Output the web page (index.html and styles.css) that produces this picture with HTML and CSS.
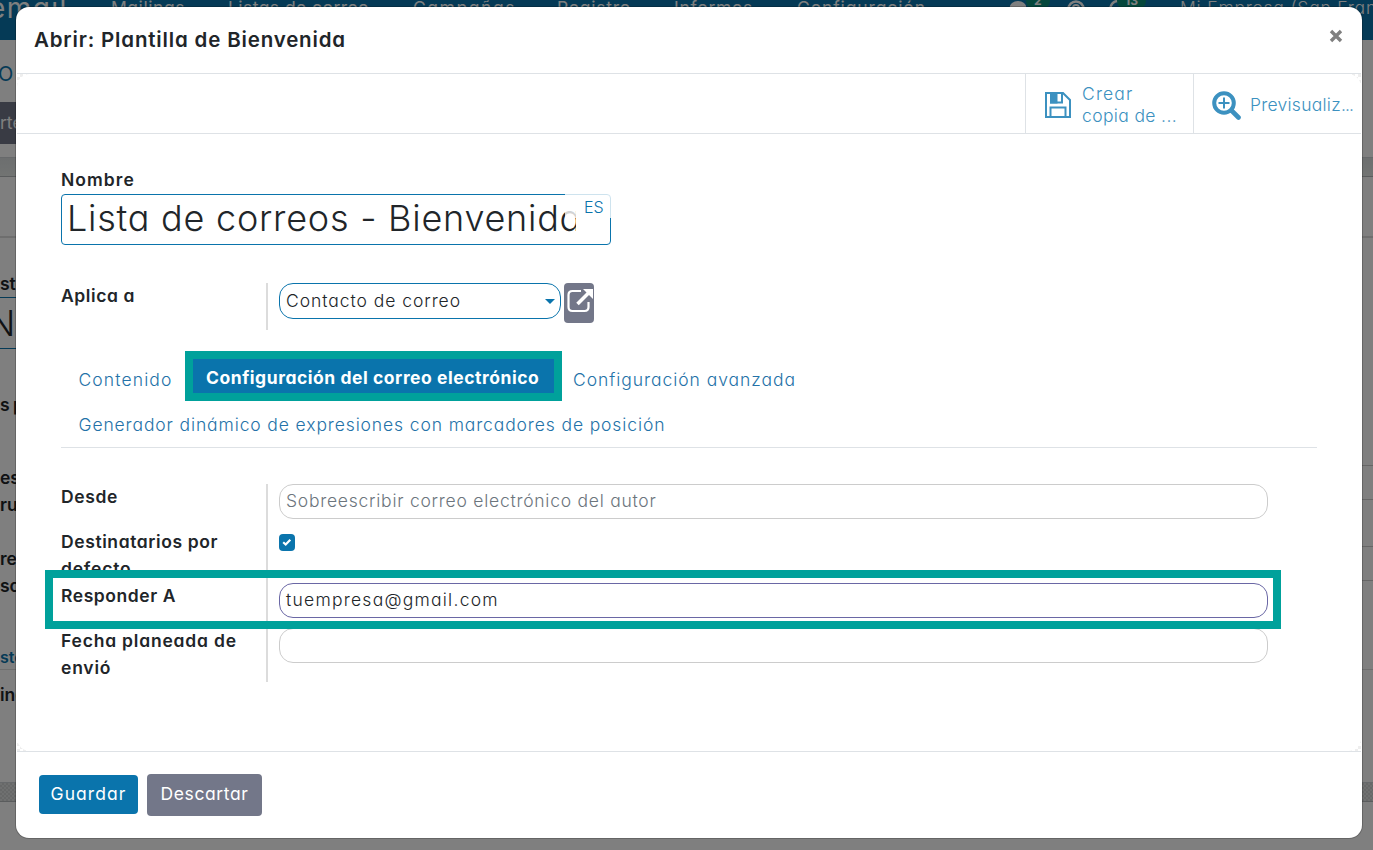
FILE: index.html
```
<!DOCTYPE html>
<html lang="es">
<head>
<meta charset="utf-8">
<title>Plantilla de Bienvenida</title>
<link rel="stylesheet" href="styles.css">
</head>
<body>
<div class="page">
  <nav class="nav">
    <span class="brand">email</span>
    <span class="n1">Mailings</span>
    <span class="n2">Listas de correo</span>
    <span class="n3">Campañas</span>
    <span class="n4">Registro</span>
    <span class="n5">Informes</span>
    <span class="n6">Configuración</span>
    <svg class="nav-icons" width="150" height="20" viewBox="0 0 150 20"><ellipse cx="18" cy="8" rx="8.500" ry="7" fill="#fff"/><circle cx="76" cy="9" r="7.500" fill="none" stroke="#fff" stroke-width="2.500"/><path d="M73 8a3 3 0 0 1 6 0c0 2-3 2-3 4" fill="none" stroke="#fff" stroke-width="2"/><path d="M118 1a8 8 0 0 0-5 14" fill="none" stroke="#fff" stroke-width="2.500"/></svg>
    <b class="count c1">2</b><b class="count c2">13</b>
    <span class="company">Mi Empresa (San Francisco)</span>
  </nav>
  <div class="crumb">O</div>
  <div class="actions"><span>rte</span></div>
  <div class="strip"></div>
  <div class="status"></div>
  <div class="bg-label">ste</div>
  <div class="bg-name">N</div>
  <div class="bg-row sp">s p</div>
  <div class="bg-row field"><span>es<br>ru:</span><i></i></div>
  <div class="bg-row field"><span>re<br>so</span><i></i></div>
  <div class="bg-tab">sto</div>
  <div class="bg-last">ing</div>
  <div class="strip pattern"></div>
</div>
<div class="backdrop"></div>
<section class="modal">
  <header class="head"><h1><span class="title">Abrir: Plantilla de Bienvenida</span></h1>
    <svg width="14" height="14" viewBox="0 0 14 14"><path d="M2 2l10 10M12 2L2 12" stroke="#7f7f7f" stroke-width="3.400"/></svg>
  </header>
  <main class="content">
    <div class="sheet">
      <div class="buttonbox">
        <div class="stat"><svg width="28" height="28" viewBox="0 0 28 28" fill="none" stroke="#3c91c0" stroke-width="2"><path d="M2 2h17l7 7v17H2z"/><path d="M6.500 26v-9.500h15V26"/><path d="M7 2v9.500h11V2"/><path d="M7 2h5.500v9.500H7z" fill="#3c91c0"/></svg><p><span class="s1">Crear</span><br><span class="s2">copia de ...</span></p></div>
        <div class="stat last"><svg width="29" height="29" viewBox="0 0 29 29" fill="none" stroke="#3c91c0"><circle cx="12" cy="12" r="9.800" stroke-width="4"/><path d="M12 6.500v11M6.500 12h11" stroke-width="2"/><path d="M19.500 19.500l7 7" stroke-width="4.600" stroke-linecap="round"/></svg><p><span class="s3">Previsualiz<span class="dots">...</span></span></p></div>
      </div>
      <div class="form">
        <label class="name-label"><span class="l1">Nombre</span></label>
        <div class="name-input"><div class="clip"><span class="big">Lista de correos - Bienvenida</span></div><span class="lang">ES</span></div>
        <div class="group g1">
          <div class="row"><label><span class="l2">Aplica a</span></label>
            <div class="select"><span class="v1">Contacto de correo</span><i></i></div>
            <div class="ext"><svg width="28" height="28" viewBox="0 0 28 28" fill="none" stroke="#fff"><path d="M15 4H6.500Q2.500 4 2.500 8v12q0 4 4 4h12q4 0 4-4v-5" stroke-width="2.200"/><path d="M11.500 17L23 5.500" stroke-width="3.600"/><path d="M17 2h10v10z" fill="#fff" stroke="none"/></svg></div>
          </div>
        </div>
        <div class="tabs">
          <div class="tabrow"><a class="t1"><span class="t1s">Contenido</span></a><a class="active"><span class="t2s">Configuración del correo electrónico</span></a><a class="t3"><span class="t3s">Configuración avanzada</span></a></div>
          <div class="tabrow second"><a class="t1"><span class="t4s">Generador dinámico de expresiones con marcadores de posición</span></a></div>
        </div>
        <div class="group g2">
          <div class="row"><label><span class="l3">Desde</span></label><div class="input ph"><span class="v2">Sobreescribir correo electrónico del autor</span></div></div>
          <div class="row tall"><label><span class="l4">Destinatarios por</span><br><span class="l4b">defecto</span></label><div class="check"><svg width="16" height="16" viewBox="0 0 16 16"><path d="M4.200 8.200l2.500 2.300 4.600-4.700" fill="none" stroke="#fff" stroke-width="2.200"/></svg></div></div>
          <div class="row"><label><span class="l5">Responder A</span></label><div class="input focus"><span class="v3">tuempresa@gmail.com</span></div></div>
          <div class="row tall"><label><span class="l6">Fecha planeada de</span><br><span class="l6">envió</span></label><div class="input"></div></div>
          <div class="mark"></div>
        </div>
      </div>
    </div>
  </main>
  <footer class="foot"><button class="save"><span class="b1">Guardar</span></button><button class="discard"><span class="b2">Descartar</span></button></footer>
</section>
</body>
</html>
```
FILE: styles.css
```
*{box-sizing:border-box}
body{margin:0;width:1373px;height:850px;overflow:hidden;position:relative;font-family:Inter,sans-serif;font-feature-settings:"cv11";font-size:17.5px;font-weight:350;line-height:27px;color:#212529}
.page{height:850px;background:#fff;overflow:hidden;font-weight:600}
.nav{height:40px;background:#0a74ac;position:relative;color:#fff;font-weight:400}
.nav span{position:absolute;top:-6px;white-space:nowrap}
.nav .brand{left:-11px;top:-5px;font-size:28px;letter-spacing:1.4px}
.n1{left:111px;letter-spacing:.55px}
.n2{left:228px;letter-spacing:.44px}
.n3{left:413px;letter-spacing:1.55px}
.n4{left:557px;letter-spacing:.76px}
.n5{left:674px;letter-spacing:.73px}
.n6{left:797px;letter-spacing:.88px}
.nav .company{left:1180px;font-weight:350;letter-spacing:.8px}
.nav-icons{position:absolute;left:1000px;top:0}
.count{position:absolute;top:-8px;height:18px;border-radius:9px;background:#0b8f79;font-size:12px;line-height:17px;padding:0 8px}
.c1{left:1026px}
.c2{left:1117px}
.crumb{height:62px;padding-top:21px;color:#0a74ac;font-size:20px;font-weight:400;text-indent:-2px}
.actions{width:100px;height:42px;background:#737789;color:#fff;line-height:42px;font-weight:400}
.strip{height:20px;margin-top:13px;border-top:1px solid #ced2d6;border-bottom:1px solid #b5b8bb;background:linear-gradient(#dadedf,#e4e8e6)}
.status{height:61px;border-bottom:2px solid #ddd}
.bg-label{height:59px;padding-top:32px}
.bg-name{width:600px;height:52px;border-top:1px solid #0a74ac;border-bottom:1px solid #0a74ac;font-size:36px;line-height:50px;font-weight:300;text-indent:-12px}
.bg-row{height:81px}
.sp{height:116px;padding-top:42px;word-spacing:-1px}
.field{display:flex;justify-content:space-between}
.field span{margin-top:-1px}
.field i{width:20px;height:35px;border:solid #ccc;border-width:1px 0}
.bg-tab{height:43px;padding-top:17px;color:#0a74ac;font-size:16px;border-bottom:1px solid #ddd}
.bg-last{height:112px;padding-top:11px}
.pattern{margin:0;background:repeating-conic-gradient(#cfd1d0 0 25%,#dfe1e0 0 50%) 0 0/4px 4px}
.backdrop{position:absolute;inset:0;background:rgba(0,0,0,.5)}
.modal{position:absolute;left:16px;top:7px;width:1346px;height:831px;background:#fff;border-radius:13px;display:flex;flex-direction:column;padding:0 1px;box-shadow:0 0 0 1px rgba(0,0,0,.2);overflow:hidden}
.head{height:67px;flex:none;border-bottom:1px solid #dee2e6;display:flex;justify-content:space-between;padding:19px 18px 0 17px}
.head svg{margin-top:3px}
h1{margin:0;font-size:20.5px;font-weight:600;line-height:27px}
.title{letter-spacing:.83px}
.content{height:678px;flex:none;border-bottom:1px solid #dee2e6;background:repeating-conic-gradient(#eee 0 25%,#fff 0 50%) 0 0/6px 6px}
.sheet{height:677px;border-radius:13px;background:#fff;overflow:hidden}
.buttonbox{height:60px;border-bottom:1px solid #dee2e6;display:flex;justify-content:flex-end}
.stat{width:168px;border-left:1px solid #dee2e6;display:flex;align-items:center;gap:10px;padding:3px 0 0 18px;line-height:22px;color:#3c91c0}
.stat.last{gap:9px}
.stat p{margin:0 0 1px;white-space:nowrap}
.s1{letter-spacing:1.15px}
.s2{letter-spacing:.36px}
.s3{letter-spacing:.25px}
.dots{letter-spacing:-.9px}
.form{padding:32px 44px 0}
label{font-weight:600;white-space:nowrap}
.l1{letter-spacing:1.05px}
.l2{letter-spacing:.59px}
.l3{letter-spacing:.63px}
.l4{letter-spacing:.6px}
.l4b{letter-spacing:.8px}
.l5{letter-spacing:.56px}
.l6{letter-spacing:.8px}
.v1{letter-spacing:.95px}
.v2{letter-spacing:.75px}
.v3{letter-spacing:1.25px}
.name-label{display:block;height:28px}
.name-input{width:550px;height:51px;border:1px solid #0a74ac;border-radius:4px;position:relative;padding:0 34px 0 5px}
.clip{overflow:hidden;white-space:nowrap;font-size:36px;line-height:47px;height:49px}
.big{letter-spacing:.76px}
.lang{position:absolute;right:-1px;top:-1px;width:46px;height:24px;padding-left:19px;background:rgba(255,255,255,.8);color:#0a74ac;font-size:16px}
.group{position:relative}
.g1{margin-top:38px;height:47px}
.row{display:flex;height:45px}
.row.tall{height:54px}
.row label{width:207px;border-right:2px solid #dcdcdc;margin-right:11px}
.row label span{position:relative;top:-1px}
.g1 .row{height:47px}
.select{width:282px;height:36px;border:1px solid #0a74ac;border-radius:14px;padding:0 5px 0 6px;display:flex;justify-content:space-between;align-items:center;line-height:34px}
.select i{border:5px solid transparent;border-top-color:#0a74ac;border-bottom:0}
.ext{width:30px;height:40px;margin-left:3px;background:#737789;border-radius:4px;padding:4px 0 0 2px;overflow:hidden}
.tabs{height:118px;border-bottom:1px solid #dee2e6;color:#2472a8;white-space:nowrap;padding-top:21px}
.tabrow{display:flex;height:50px}
.tabrow a{padding-top:15px}
.tabs .t1{padding-left:17.5px;width:124px}
.tabs .active{width:377px;border:8px solid #00a19b;background:#0a74ac;color:#fff;font-weight:700;padding:5px 0 0 13px}
.tabs .t3{padding-left:11px}
.t1s{letter-spacing:1.12px}
.t2s{letter-spacing:.54px}
.t3s{letter-spacing:.95px}
.t4s{letter-spacing:.88px}
.second a{padding-top:10px}
.g2{margin-top:36px}
.input{width:989px;height:35px;border:1px solid #ccc;border-radius:14px;padding-left:6px;line-height:32px}
.ph{color:#6c757d}
.focus{border-color:#6a67a5}
.check{width:16px;height:17px;background:#0a74ac;border-radius:4px;margin-top:5px;display:flex}
.mark{position:absolute;left:-16px;top:86px;width:1236px;height:59px;border:8px solid #00a19b}
.foot{display:flex;gap:9px;padding:22px 22px 0;align-items:flex-start}
button{border:0;border-radius:4px;color:#fff;font:400 17.5px/27px Inter,sans-serif;font-feature-settings:"cv11";padding:0 0 3px;white-space:nowrap}
.save{width:99px;height:39px;background:#0a74ac;margin-top:1px}
.discard{width:115px;height:42px;background:#737789}
.b1{letter-spacing:1.08px}
.b2{letter-spacing:.61px}
```
